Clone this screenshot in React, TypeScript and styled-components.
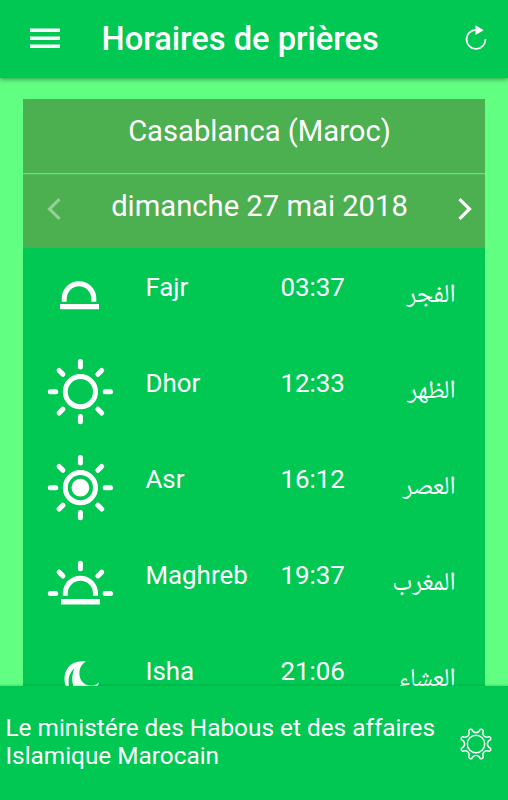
import React from "react";
import styled, { createGlobalStyle } from "styled-components";

const GlobalStyle = createGlobalStyle`
  * { box-sizing: border-box; }
  html, body { margin: 0; height: 100%; }
  body { font-family: Roboto, "Liberation Sans", sans-serif; color: #fff; background: #61ff82; overflow: hidden; }
`;

const Screen = styled.div`
  width: 508px;
  height: 800px;
  display: flex;
  flex-direction: column;
  background: #61ff82;
  overflow: hidden;
`;

const Toolbar = styled.header`
  flex: none;
  height: 78px;
  display: flex;
  align-items: center;
  padding: 0 20px 0 30px;
  background: #00c853;
  box-shadow: 0 1px 5px rgba(0, 40, 10, 0.5);
  z-index: 1;
`;

const Title = styled.h1`
  flex: 1;
  margin: 0 0 0 41.5px;
  font-size: 32.65px;
  line-height: 38px;
  font-weight: 500;
  white-space: nowrap;
`;

const IconButton = styled.button`
  display: flex;
  flex: none;
  padding: 0;
  border: 0;
  background: none;
  color: inherit;
`;

const Content = styled.main`
  flex: 1;
  min-height: 0;
  overflow: hidden;
  padding: 21px 23px 0;
`;

const Card = styled.section`
  background: #00c853;
`;

const CardBar = styled.div<{ $divided?: boolean }>`
  display: grid;
  grid-template-columns: 64px 1fr 44px;
  height: ${(p) => (p.$divided ? 75 : 74)}px;
  background: #4caf50;
  border-bottom: ${(p) => (p.$divided ? "1px solid #5fe877" : "0")};
  box-shadow: ${(p) => (p.$divided ? "none" : "inset 0 1px rgba(95, 255, 130, 0.2)")};
`;

const BarText = styled.div`
  grid-column: 2;
  padding-top: 15px;
  margin-left: -9px;
  text-align: center;
  font-size: 29.2px;
  line-height: 34px;
  white-space: nowrap;
`;

const Arrow = styled(IconButton)<{ $dim?: boolean }>`
  padding: 24px 0 0 ${(p) => (p.$dim ? 24 : 16.5)}px;
  opacity: ${(p) => (p.$dim ? 0.4 : 1)};
`;

const PrayerRow = styled.div`
  display: grid;
  grid-template-columns: 122.4px 135px 80px 1fr;
  height: 96px;
  padding-right: 29.4px;
`;

const PrayerIcon = styled.div`
  padding: 10px 0 0 22px;
`;

const Latin = styled.div`
  padding-top: 24px;
  font-size: 25.9px;
  line-height: 30px;
  white-space: nowrap;
`;

const Arabic = styled.div`
  padding-top: 29px;
  font-family: "Noto Naskh Arabic UI", "Noto Naskh Arabic", "Droid Arabic Naskh", "Noto Sans Arabic", sans-serif;
  font-size: 25.8px;
  line-height: 36px;
  white-space: nowrap;
`;

const Footer = styled.footer`
  flex: none;
  height: 114px;
  display: flex;
  justify-content: space-between;
  padding: 28px 15px 0 5.5px;
  background: #00c853;
  box-shadow: 0 -1px 2px rgba(0, 60, 20, 0.2);
  z-index: 1;
`;

const Source = styled.p`
  margin: 0;
  width: 440px;
  font-size: 24.35px;
  line-height: 28px;
`;

const Gear = styled(IconButton)`
  align-self: flex-start;
  padding-top: 13px;
`;

type Kind = "dawn" | "noon" | "afternoon" | "sunset" | "night";

const ray = (cx: number, cy: number, deg: number) => (
  <line
    key={deg}
    x1={cx + 24.7}
    y1={cy}
    x2={cx + 30.1}
    y2={cy}
    transform={`rotate(${deg} ${cx} ${cy})`}
    strokeLinecap="round"
  />
);

function SkyIcon({ kind }: { kind: Kind }) {
  return (
    <svg width="72" height="80" viewBox="0 0 72 80" fill="none" stroke="#fff" strokeWidth="5" display="block">
      {kind === "dawn" && (
        <>
          <path d="M19.2 43.700v-3.100a14.800 14.800 0 0 1 29.600 0v3.100" />
          <path d="M15 48.700h39" strokeWidth="5.300" />
        </>
      )}
      {(kind === "noon" || kind === "afternoon") && (
        <>
          <circle cx="35.4" cy="37.7" r="15.1" />
          {[0, 45, 90, 135, 180, 225, 270, 315].map((d) => ray(35.4, 37.7, d))}
        </>
      )}
      {kind === "afternoon" && <circle cx="35.4" cy="37.7" r="8.9" fill="#fff" stroke="none" />}
      {kind === "sunset" && (
        <>
          <path d="M20.3 49.700v-2.400a15.100 15.100 0 0 1 30.200 0v2.400" />
          <path d="M16 55.800h39" strokeWidth="5.500" />
          {[0, 180, 225, 270, 315].map((d) => ray(35.4, 47.4, d))}
        </>
      )}
      {kind === "night" && (
        <path
          stroke="none"
          fill="#fff"
          fillRule="evenodd"
          d="M41 19.500C26 17.500 19.500 27 19.500 37c0 12 8 18 17 18 8 0 15-6 17.500-14.500-4 3-6.500 3.300-9 3-7-.8-10-5.500-10.500-10.500C34 27 36 22.500 41 19.500ZM29.500 26.500C24 31 22.800 37 24 44c1 4 4 7 8 8-4-6-7-15-2.500-25.500Z"
        />
      )}
    </svg>
  );
}

const prayers: { name: string; time: string; arabic: string; kind: Kind }[] = [
  { name: "Fajr", time: "03:37", arabic: "الفجر", kind: "dawn" },
  { name: "Dhor", time: "12:33", arabic: "الظهر", kind: "noon" },
  { name: "Asr", time: "16:12", arabic: "العصر", kind: "afternoon" },
  { name: "Maghreb", time: "19:37", arabic: "المغرب", kind: "sunset" },
  { name: "Isha", time: "21:06", arabic: "العشاء", kind: "night" },
];

export default function App() {
  return (
    <Screen>
      <GlobalStyle />
      <Toolbar>
        <IconButton aria-label="Menu">
          <svg width="30" height="22" viewBox="0 0 30 22" fill="#fff">
            <path d="M0 .400h30V4H0zM0 8.400h30V12H0zM0 16.400h30V20H0z" />
          </svg>
        </IconButton>
        <Title>Horaires de prières</Title>
        <IconButton aria-label="Actualiser">
          <svg width="24" height="28" viewBox="0 0 24 28" fill="none">
            <path d="M12 4.800A9.500 9.500 0 1 0 21.500 14.300" stroke="#fff" strokeWidth="1.800" />
            <path d="M11.500.2 19.700 5.200l-8.200 4.900Z" fill="#fff" />
          </svg>
        </IconButton>
      </Toolbar>
      <Content>
        <Card>
          <CardBar $divided>
            <BarText>Casablanca (Maroc)</BarText>
          </CardBar>
          <CardBar>
            <Arrow $dim aria-label="Jour précédent">
              <svg width="14" height="22" viewBox="0 0 14 22" fill="none" stroke="#fff" strokeWidth="3.200">
                <path d="M12.500 1.200 2.500 11l10 9.800" />
              </svg>
            </Arrow>
            <BarText>dimanche 27 mai 2018</BarText>
            <Arrow aria-label="Jour suivant">
              <svg width="14" height="22" viewBox="0 0 14 22" fill="none" stroke="#fff" strokeWidth="3.200">
                <path d="M1.500 1.200 11.500 11l-10 9.800" />
              </svg>
            </Arrow>
          </CardBar>
          {prayers.map((p) => (
            <PrayerRow key={p.name}>
              <PrayerIcon>
                <SkyIcon kind={p.kind} />
              </PrayerIcon>
              <Latin>{p.name}</Latin>
              <Latin>{p.time}</Latin>
              <Arabic dir="rtl" lang="ar">{p.arabic}</Arabic>
            </PrayerRow>
          ))}
        </Card>
      </Content>
      <Footer>
        <Source>Le ministére des Habous et des affaires Islamique Marocain</Source>
        <Gear aria-label="Réglages">
          <svg width="34" height="34" viewBox="0 0 34 34" fill="none" stroke="#fff" strokeWidth="1.400">
            <circle cx="17" cy="17" r="8.700" />
            {[0, 45, 90, 135, 180, 225, 270, 315].map((d) => (
              <path
                key={d}
                transform={`rotate(${d} 17 17)`}
                d="M17 5.600C19.500 5.600 20.500 4.200 21.300 2.400Q23.200 1.700 24.290 3.640C23.570 5.470 23.290 7.170 25.060 8.940"
              />
            ))}
          </svg>
        </Gear>
      </Footer>
    </Screen>
  );
}
